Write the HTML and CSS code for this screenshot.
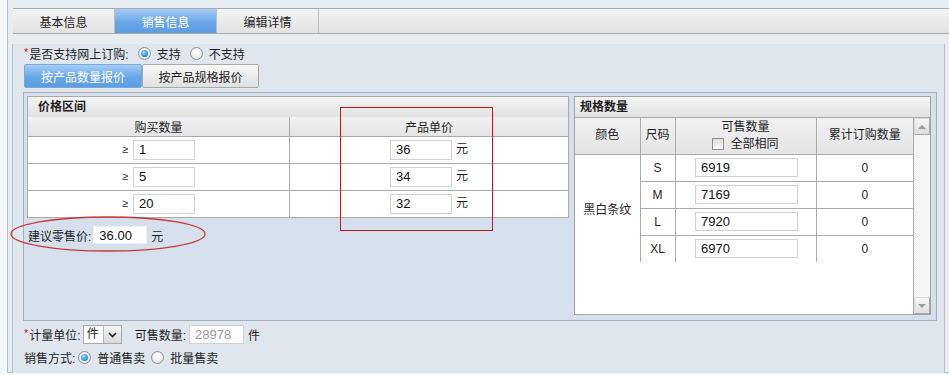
FILE: index.html
```html
<!DOCTYPE html>
<html lang="zh-CN">
<head>
    <meta charset="UTF-8">
    <title>销售信息</title>
    <link rel="stylesheet" href="styles.css">
</head>
<body>
    <div class="frame">
        <div class="tabbar">
            <div class="tab">基本信息</div>
            <div class="tab active">销售信息</div>
            <div class="tab">编辑详情</div>
        </div>

        <div class="content">
            <div class="line first">
                <span class="req">*</span>是否支持网上订购:
                <span class="radio on"></span><span class="opt">支持</span>
                <span class="radio"></span><span class="opt">不支持</span>
            </div>

            <div class="subtabs">
                <div class="subtab active">按产品数量报价</div>
                <div class="subtab">按产品规格报价</div>
            </div>

            <div class="pricebox">
                <div class="price-panel">
                    <div class="panel-head">价格区间</div>
                    <table class="grid price">
                        <tr><th class="qty">购买数量</th><th>产品单价</th></tr>
                        <tr><td><span class="ge">≥</span><input class="num" value="1"></td><td><input class="num" value="36"><span class="unit">元</span></td></tr>
                        <tr><td><span class="ge">≥</span><input class="num" value="5"></td><td><input class="num" value="34"><span class="unit">元</span></td></tr>
                        <tr><td><span class="ge">≥</span><input class="num" value="20"></td><td><input class="num" value="32"><span class="unit">元</span></td></tr>
                    </table>
                    <div class="retail">建议零售价:<input class="retail-input" value="36.00"><span class="unit">元</span></div>
                </div>

                <div class="spec-panel">
                    <div class="panel-head">规格数量</div>
                    <div class="spec-body">
                        <table class="grid spec">
                            <tr>
                                <th class="c-color">颜色</th>
                                <th class="c-size">尺码</th>
                                <th class="c-stock">可售数量<br><span class="check"></span>全部相同</th>
                                <th class="c-total">累计订购数量</th>
                            </tr>
                            <tr><td rowspan="4">黑白条纹</td><td>S</td><td><input class="stock" value="6919"></td><td>0</td></tr>
                            <tr><td>M</td><td><input class="stock" value="7169"></td><td>0</td></tr>
                            <tr><td>L</td><td><input class="stock" value="7920"></td><td>0</td></tr>
                            <tr><td>XL</td><td><input class="stock" value="6970"></td><td>0</td></tr>
                        </table>
                        <div class="scrollbar">
                            <div class="sb-btn"><span class="tri up"></span></div>
                            <div class="sb-track"></div>
                            <div class="sb-btn"><span class="tri down"></span></div>
                        </div>
                    </div>
                </div>

                <div class="mark-rect"></div>
                <svg class="mark-ellipse" width="198" height="38" viewBox="0 0 198 38">
                    <ellipse cx="99" cy="19" rx="97" ry="17" fill="none" stroke="#c8363a" stroke-width="1.3"/>
                </svg>
            </div>

            <div class="line row-unit">
                <span class="req">*</span>计量单位:
                <span class="select"><span class="sel-val">件</span><span class="sel-btn">
                    <svg width="9" height="6" viewBox="0 0 9 6"><path d="M1 1 L4.5 4.5 L8 1" fill="none" stroke="#222" stroke-width="1.6"/></svg>
                </span></span>
                <span class="label-gap">可售数量:</span>
                <input class="total" value="28978" disabled><span class="unit">件</span>
            </div>

            <div class="line row-mode">
                销售方式:
                <span class="radio on"></span><span class="opt">普通售卖</span>
                <span class="radio"></span><span class="opt">批量售卖</span>
            </div>
        </div>
    </div>
</body>
</html>
```

FILE: styles.css
```css
* {
    box-sizing: border-box;
}

body {
    margin: 0;
    background: #f4f6f8;
    font-family: "Liberation Sans", "Noto Sans CJK SC", sans-serif;
    font-size: 12px;
    color: #1e1e1e;
}

.frame {
    margin-left: 7px;
    height: 373px;
    border-left: 1px solid #b4bcc5;
    border-bottom: 1px solid #b4bcc5;
    background: #e8edf2;
    padding: 8px 0 0 4px;
}

/* top tabs */
.tabbar {
    display: flex;
    height: 26px;
    margin-left: 1px;
    border-top: 1px solid #a9a9a9;
    border-bottom: 1px solid #a9a9a9;
    background: linear-gradient(#f3f3f3, #e2e2e2);
}

.tab {
    width: 102px;
    border-right: 1px solid #bdbdbd;
    display: flex;
    align-items: center;
    justify-content: center;
    font-size: 12px;
}

.tab.active {
    background: linear-gradient(#a4cdf5, #69a6e6 55%, #5c9de2);
    color: #fff;
}

.content {
    width: 933px;
    height: 336px;
    border: 1px solid #b6bec7;
    border-top: none;
    background: #dfe6ee;
    padding-left: 10px;
}

.line {
    display: flex;
    align-items: center;
    height: 18px;
    white-space: nowrap;
}

.first {
    margin-top: 10px;
    padding-left: 1px;
}

.req {
    color: #d01010;
    font-size: 11px;
    margin-right: 1px;
    align-self: flex-start;
    padding-top: 2px;
}

.radio {
    display: inline-block;
    width: 13px;
    height: 13px;
    border-radius: 50%;
    border: 1px solid #8e8f8f;
    background: radial-gradient(circle at 50% 40%, #ffffff, #dcdcdc);
    position: relative;
    margin-left: 9px;
}

.radio.on::after {
    content: '';
    position: absolute;
    left: 2px;
    top: 2px;
    width: 7px;
    height: 7px;
    border-radius: 50%;
    background: radial-gradient(circle at 40% 35%, #9edcff, #1d86d6 70%);
}

.opt {
    margin-left: 6px;
}

/* sub tabs */
.subtabs {
    display: flex;
    margin: 2px 0 0 1px;
    height: 24px;
}

.subtab {
    width: 117px;
    display: flex;
    align-items: center;
    justify-content: center;
    border: 1px solid #a9a9a9;
    border-radius: 2px;
    background: linear-gradient(#f7f7f7, #e0e0e0);
}

.subtab.active {
    width: 118px;
    border-color: #79a9db;
    background: linear-gradient(#a4cdf5, #69a6e6 55%, #5c9de2);
    color: #fff;
}

/* main price box */
.pricebox {
    position: relative;
    display: flex;
    gap: 5px;
    width: 914px;
    height: 229px;
    margin-top: 4px;
    padding: 3px 5px 5px 3px;
    border: 1px solid #a5afba;
    background: #d6e0ec;
}

.price-panel {
    width: 542px;
}

.panel-head {
    height: 22px;
    line-height: 20px;
    padding-left: 10px;
    font-weight: bold;
    border: 1px solid #a9a9a9;
    background: linear-gradient(#f4f4f4, #e2e2e2);
}

.grid {
    border-collapse: collapse;
    background: #fff;
}

.grid th,
.grid td {
    border: 1px solid #ababab;
    padding: 0;
    text-align: center;
    font-weight: normal;
}

.grid th {
    background: linear-gradient(#f1f1f1, #e4e4e4);
}

.price {
    width: 542px;
    margin-top: -1px;
}

.price th {
    height: 19px;
    border-top: none;
}

.price td {
    height: 27px;
}

.price .qty {
    width: 262px;
}

.ge {
    margin-right: 5px;
    font-size: 11px;
}

input {
    font-family: "Liberation Sans", "Noto Sans CJK SC", sans-serif;
    font-size: 13px;
    color: #111;
    border: 1px solid #cfd3d7;
    background: #fff;
    padding: 0 0 0 5px;
    margin: 0;
    vertical-align: middle;
}

.num {
    width: 62px;
    height: 20px;
}

.unit {
    margin-left: 4px;
}

.retail {
    display: flex;
    align-items: center;
    height: 19px;
    margin-top: 8px;
    padding-left: 1px;
}

.retail-input {
    width: 54px;
    height: 18px;
    border-color: #eef0f2;
    margin-left: 2px;
}

/* spec panel */
.spec-panel {
    width: 357px;
    border: 1px solid #a2a2a2;
    background: #fff;
    display: flex;
    flex-direction: column;
}

.spec-panel .panel-head {
    height: 21px;
    border: none;
    border-bottom: 1px solid #a9a9a9;
    padding-left: 5px;
}

.spec-body {
    flex: 1;
    display: flex;
}

.spec {
    width: 338px;
    border-style: hidden;
    align-self: flex-start;
}

.spec th {
    height: 36px;
    line-height: 17px;
    border-top: none;
}

.spec td {
    height: 27px;
}

.c-color {
    width: 65px;
}

.c-size {
    width: 35px;
}

.c-stock {
    width: 141px;
}

.check {
    display: inline-block;
    width: 12px;
    height: 12px;
    border: 1px solid #8f8f8f;
    background: linear-gradient(#dcdcdc, #fafafa);
    vertical-align: -2px;
    margin-right: 6px;
}

.stock {
    width: 103px;
    height: 19px;
    margin-left: 2px;
}

.scrollbar {
    width: 17px;
    border-left: 1px solid #ababab;
    display: flex;
    flex-direction: column;
}

.sb-btn {
    height: 17px;
    border: 1px solid #a8a8a8;
    border-left-color: #d8d8d8;
    border-top-color: #d8d8d8;
    background: linear-gradient(#f6f6f6, #dedede);
    display: flex;
    align-items: center;
    justify-content: center;
}

.tri {
    width: 0;
    height: 0;
    border-left: 4px solid transparent;
    border-right: 4px solid transparent;
}

.tri.up {
    border-bottom: 4px solid #9a9a9a;
}

.tri.down {
    border-top: 4px solid #9a9a9a;
}

.sb-track {
    flex: 1;
    background: repeating-conic-gradient(#ececec 0 25%, #ffffff 0 50%) 0 0 / 2px 2px;
}

/* review marks */
.mark-rect {
    position: absolute;
    left: 316px;
    top: 14px;
    width: 153px;
    height: 124px;
    border: 1px solid #c4161c;
}

.mark-ellipse {
    position: absolute;
    left: -15px;
    top: 122px;
}

/* bottom rows */
.row-unit {
    margin-top: 4px;
    height: 19px;
    padding-left: 1px;
}

.select {
    display: flex;
    width: 39px;
    height: 19px;
    margin-left: 2px;
    border: 1px solid #a9a9a9;
    background: #fff;
}

.sel-val {
    width: 19px;
    padding-left: 3px;
    line-height: 17px;
}

.sel-btn {
    width: 18px;
    border-left: 1px solid #b8b8b8;
    background: linear-gradient(#f4f4f4, #d9d9d9);
    display: flex;
    align-items: center;
    justify-content: center;
}

.label-gap {
    margin-left: 13px;
}

.total {
    width: 55px;
    height: 19px;
    margin-left: 3px;
    color: #9a9a9a;
    background: #fff;
}

.row-mode {
    margin-top: 4px;
    padding-left: 1px;
}

.row-mode .radio {
    margin-left: 3px;
}

.row-mode .radio + .opt + .radio {
    margin-left: 6px;
}
```
